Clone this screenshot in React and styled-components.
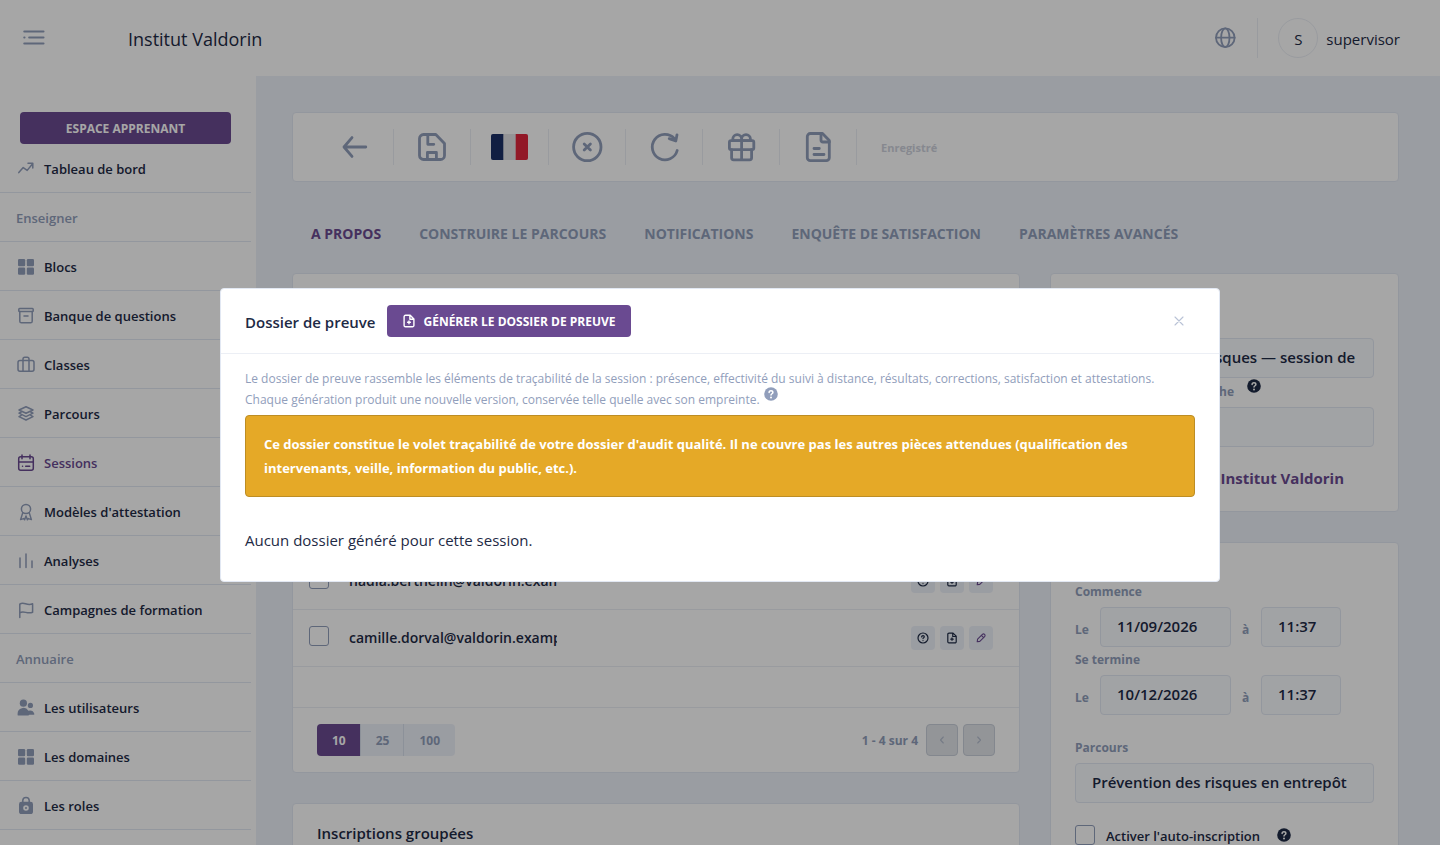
import React from "react";
import styled, { createGlobalStyle, css } from "styled-components";

const c = {
  ink: "#1e2a45",
  muted: "#919ebb",
  purple: "#6a4a91",
  page: "#edf2f9",
  line: "#eceff5",
  border: "#e2e8f3",
  field: "#f8fafd",
};

const Global = createGlobalStyle`
  *, *::before, *::after { box-sizing: border-box; }
  html, body { margin: 0; height: 100%; }
  body { font-family: "Open Sans", "Liberation Sans", sans-serif; font-size: 15px; color: ${c.ink}; }
  button, input { font-family: inherit; margin: 0; }
  svg { display: block; flex: none; }
`;

const Shell = styled.div`
  display: flex;
  flex-direction: column;
  height: 100vh;
  overflow: hidden;
  background: #fff;
`;

const Header = styled.header`
  flex: none;
  display: flex;
  align-items: center;
  height: 76px;
  padding: 0 40px 0 22px;
`;

const IconButton = styled.button`
  display: grid;
  place-items: center;
  padding: 0;
  border: 0;
  background: none;
  color: ${c.muted};
  cursor: pointer;
`;

const Brand = styled.div`
  flex: 1;
  margin-left: 82px;
  padding-top: 2px;
  font-size: 18px;
  line-height: 24px;
`;

const HeaderDivider = styled.span`
  width: 1px;
  height: 40px;
  margin: 0 20px 0 21px;
  background: ${c.line};
`;

const UserButton = styled.button`
  display: flex;
  align-items: center;
  gap: 8px;
  padding: 0;
  border: 0;
  background: none;
  color: ${c.ink};
  font-size: 15px;
  line-height: 24px;
`;

const Avatar = styled.span`
  display: grid;
  place-items: center;
  width: 40px;
  height: 40px;
  padding-top: 2px;
  border: 1px solid ${c.line};
  border-radius: 50%;
`;

const UserName = styled.span`
  padding-top: 2px;
`;

const Columns = styled.div`
  flex: 1;
  min-height: 0;
  display: flex;
`;

const Sidebar = styled.nav`
  flex: none;
  width: 256px;
  padding: 36px 5px 0 0;
  overflow: hidden;
`;

const PrimaryButton = styled.button`
  display: inline-flex;
  align-items: center;
  justify-content: center;
  gap: 7px;
  height: 32px;
  padding: 0 15px;
  border: 0;
  border-radius: 4px;
  background: ${c.purple};
  color: #fff;
  font-size: 12px;
  font-weight: 700;
  text-transform: uppercase;
`;

const LearnerButton = styled(PrimaryButton)`
  display: flex;
  width: calc(100% - 40px);
  margin: 0 20px;
`;

const navRow = css`
  display: flex;
  align-items: center;
  height: 49px;
  border-bottom: 1px solid ${c.border};
  font-size: 13px;
  font-weight: 600;
  line-height: 20px;
`;

const NavLink = styled.a`
  ${navRow}
  gap: 8px;
  padding: 2px 16px 0;
  color: ${(p) => (p.$active ? c.purple : c.ink)};
  text-decoration: none;
  svg { color: ${(p) => (p.$active ? c.purple : c.muted)}; }
`;

const NavHeading = styled.div`
  ${navRow}
  padding: 2px 16px 0;
  color: ${c.muted};
`;

const Main = styled.main`
  flex: 1;
  min-width: 0;
  padding: 36px 41px 0 36px;
  overflow: hidden;
  background: ${c.page};
`;

const Card = styled.section`
  border: 1px solid ${c.border};
  border-radius: 4px;
  background: #fff;
`;

const Toolbar = styled(Card)`
  display: flex;
  align-items: center;
  height: 70px;
  padding: 0 24px;
`;

const Tool = styled(IconButton)`
  height: 36px;
  padding: 0 20px;
  border-right: 1px solid ${c.line};
`;

const Saved = styled.span`
  margin-left: 24px;
  color: #ced2dc;
  font-size: 11px;
  font-weight: 700;
`;

const Tabs = styled.div`
  display: flex;
  gap: 38px;
  padding: 40px 19px 27px;
`;

const Tab = styled.a`
  color: ${(p) => (p.$active ? c.purple : c.muted)};
  font-size: 14px;
  font-weight: 700;
  line-height: 24px;
  text-decoration: none;
  text-transform: uppercase;
  white-space: nowrap;
`;

const Grid = styled.div`
  display: grid;
  grid-template-columns: minmax(0, 1fr) 349px;
  gap: 30px;
  align-items: start;
`;

const Stack = styled.div`
  display: grid;
  gap: 30px;
`;

const CardHead = styled.div`
  height: ${(p) => p.$height}px;
`;

const Table = styled.table`
  width: 100%;
  border-collapse: separate;
  border-spacing: 0;
  table-layout: fixed;
  td {
    height: 57px;
    padding: 0;
    border-bottom: 1px solid ${c.line};
  }
  td:first-child { width: 56px; padding: 0 0 4px 16px; }
  td:nth-child(2) { width: 208px; }
  td:last-child { padding-right: 26px; }
`;

const Check = styled.input`
  appearance: none;
  flex: none;
  display: block;
  width: 20px;
  height: 20px;
  margin: 0;
  border: 1px solid ${c.muted};
  border-radius: 3px;
  background: #fff;
`;

const Email = styled.div`
  overflow: hidden;
  font-size: 14px;
  font-weight: 600;
  line-height: 24px;
  white-space: nowrap;
`;

const Actions = styled.div`
  display: flex;
  justify-content: flex-end;
  gap: 5px;
`;

const Action = styled(IconButton)`
  width: 24px;
  height: 24px;
  border-radius: 4px;
  background: ${c.page};
  color: ${(p) => (p.$accent ? c.purple : c.ink)};
`;

const Spacer = styled.div`
  height: 41px;
  border-bottom: 1px solid ${c.line};
`;

const TableFoot = styled.div`
  display: flex;
  align-items: center;
  justify-content: space-between;
  padding: 16px 24px;
`;

const SizeGroup = styled.div`
  display: flex;
  overflow: hidden;
  border-radius: 4px;
`;

const SizeButton = styled.button`
  height: 32px;
  padding: 0 14px 0 15px;
  border: 0;
  border-right: 1px solid #d8dfeb;
  background: ${(p) => (p.$active ? c.purple : c.page)};
  color: ${(p) => (p.$active ? "#fff" : c.muted)};
  font-size: 12px;
  font-weight: 700;
  &:last-child { padding-right: 15px; border-right: 0; }
`;

const Pager = styled.div`
  display: flex;
  align-items: center;
  color: ${c.muted};
  font-size: 12px;
  font-weight: 700;
  button + button { margin-left: 5px; }
`;

const PageButton = styled(IconButton)`
  width: 32px;
  height: 32px;
  border: 1px solid #c9cfda;
  border-radius: 4px;
  background: #e2e5ea;
  color: #b4bdce;
`;

const Count = styled.span`
  margin-right: 8px;
`;

const CardTitle = styled.h2`
  margin: 0;
  padding: 17px 24px 80px;
  font-size: 15px;
  font-weight: 600;
  line-height: 24px;
`;

const Form = styled.div`
  padding: 0 24px;
`;

const Label = styled.label`
  display: flex;
  align-items: center;
  justify-content: ${(p) => (p.$width ? "flex-end" : "flex-start")};
  width: ${(p) => (p.$width ? `${p.$width}px` : "auto")};
  height: 28px;
  padding-bottom: 3px;
  color: ${c.muted};
  font-size: 12px;
  font-weight: 700;
`;

const HelpRow = styled.div`
  display: flex;
  gap: 13px;
  height: 29px;
  padding-top: 1px;
`;

const Help = styled.span`
  display: inline-block;
  color: ${c.ink};
`;

const InlineHelp = styled(Help)`
  margin: -5px 0 0 1px;
  color: ${c.muted};
  vertical-align: 3px;
`;

const Field = styled.input`
  display: block;
  width: ${(p) => (p.$width ? `${p.$width}px` : "100%")};
  height: 40px;
  padding: 0 16px 2px;
  border: 1px solid ${c.border};
  border-radius: 4px;
  background: ${c.field};
  color: ${c.ink};
  font-size: 15px;
  font-weight: 600;
`;

const Owner = styled.div`
  display: flex;
  justify-content: flex-end;
  padding: 19px 30px 21px 0;
  a {
    color: ${c.purple};
    font-size: 15px;
    font-weight: 700;
    line-height: 24px;
    text-decoration: none;
  }
`;

const DateRow = styled.div`
  display: flex;
  align-items: center;
`;

const Small = styled.label`
  width: ${(p) => p.$width}px;
  padding: 4px 0 0 ${(p) => p.$indent || 0}px;
  color: ${c.muted};
  font-size: 12px;
  font-weight: 700;
`;

const Group = styled.div`
  margin-top: 20px;
`;

const CheckRow = styled.div`
  display: flex;
  align-items: center;
  gap: 11px;
  padding: 21px 0;
  font-size: 13px;
  font-weight: 600;
  line-height: 20px;
  label { padding-top: 2px; }
  span { margin-left: 6px; }
`;

const Backdrop = styled.div`
  position: fixed;
  inset: 0;
  display: flex;
  align-items: center;
  justify-content: center;
  padding: 25px 24px 0;
  background: rgba(0, 0, 0, 0.35);
`;

const Dialog = styled.div`
  width: 1000px;
  max-width: 100%;
  border: 1px solid ${c.border};
  border-radius: 4px;
  background: #fff;
`;

const DialogHead = styled.div`
  display: flex;
  align-items: center;
  height: 65px;
  padding: 0 32px 0 24px;
  border-bottom: 1px solid ${c.line};
  h1 {
    margin: 0 12px 0 0;
    padding-top: 2px;
    font-size: 15px;
    font-weight: 600;
    line-height: 24px;
  }
`;

const Close = styled(IconButton)`
  width: 16px;
  height: 16px;
  margin-left: auto;
  color: #b9c2d6;
`;

const DialogBody = styled.div`
  padding: 14px 24px 29px;
`;

const Intro = styled.p`
  margin: 0;
  color: ${c.muted};
  font-size: 12px;
  line-height: 21px;
`;

const Alert = styled.div`
  margin-top: 5px;
  padding: 16px 18px;
  border: 1px solid #bd8d24;
  border-radius: 4px;
  background: #e5a927;
  color: #fff;
  font-size: 13px;
  font-weight: 700;
  line-height: 24px;
`;

const Empty = styled.p`
  margin: 31px 0 0;
  font-size: 15px;
  line-height: 24px;
`;

function Svg({ size = 16, box = size, sw = 1.3, children }) {
  return (
    <svg width={size} height={size} viewBox={`0 0 ${box} ${box}`} fill="none" stroke="currentColor"
      strokeWidth={sw} strokeLinecap="round" strokeLinejoin="round" aria-hidden="true">
      {children}
    </svg>
  );
}

const squares = (
  <g fill="currentColor" stroke="none">
    <rect x="2" y="2" width="7.200" height="7.200" rx="1.200" />
    <rect x="10.800" y="2" width="7.200" height="7.200" rx="1.200" />
    <rect x="2" y="10.500" width="7.200" height="7.200" rx="1.200" />
    <rect x="10.800" y="10.500" width="7.200" height="7.200" rx="1.200" />
  </g>
);

const navIcons = {
  trend: <path d="M2.8 13.6 7.2 8.6l4 2.8 5.2-6.400M12 4.200h4.800v4.800" />,
  squares,
  archive: (
    <>
      <rect x="2.800" y="2.600" width="14.400" height="3" rx="0.800" />
      <path d="M3.800 5.600v9.600a1.600 1.600 0 0 0 1.600 1.600h9.200a1.600 1.600 0 0 0 1.600-1.600V5.600M8 10h4" />
    </>
  ),
  briefcase: (
    <>
      <rect x="2" y="5.400" width="16" height="10.800" rx="2" />
      <path d="M7 16.200V4a1.800 1.800 0 0 1 1.800-1.800h2.400A1.800 1.800 0 0 1 13 4v12.200" />
    </>
  ),
  layers: (
    <>
      <path d="m3 6 7-3.300L17 6l-7 3.300z" />
      <path d="m5.200 8-2.200 1.200 7 3.400 7-3.400L14.800 8M5.200 11.400 3 12.600l7 3.400 7-3.400-2.200-1.200" />
    </>
  ),
  calendar: (
    <>
      <rect x="2.700" y="3.800" width="14.600" height="13.400" rx="2" />
      <path d="M2.700 9h14.600M6 2v3.800M14 2v3.800M6.500 13.200h.1M9.700 13.200h4" />
    </>
  ),
  award: (
    <>
      <circle cx="10" cy="7" r="4.600" />
      <path d="m6.800 10.600-2.200 7 3-1 1 1.200L10 14l1.400 3.800 1-1.200 3 1-2.200-7" />
    </>
  ),
  bars: <path d="M4 7v9.500M10 3v13.500M16 10v6.500" />,
  flag: <path d="M3.800 17.600V4.200c4-3 7 2 12.800-.4v8.400c-5.600 2.400-8.600-2.200-12.800.6" />,
  users: (
    <g fill="currentColor" stroke="none">
      <circle cx="7.400" cy="5.200" r="3.600" />
      <circle cx="14.400" cy="7.400" r="2.600" />
      <path d="M1.600 17v-1.200a5.800 5.800 0 0 1 10.800-3 5 5 0 0 1 6 3.200c.1.500-.2.800-.7.800h-4.400a1.400 1.400 0 0 1-1.200.8H2.400a.8.800 0 0 1-.8-.6z" />
    </g>
  ),
  lock: (
    <>
      <path d="M6.800 7V4.600a3.200 3.200 0 0 1 6.400 0V7" />
      <path fill="currentColor" stroke="none" fillRule="evenodd"
        d="M5.400 5.800h9.200a2.400 2.400 0 0 1 2.400 2.400v7.200a2.600 2.600 0 0 1-2.600 2.600H5.600a2.600 2.600 0 0 1-2.600-2.600V8.200a2.400 2.400 0 0 1 2.400-2.400zM10 9.200a2.800 2.800 0 1 0 0 5.600 2.800 2.800 0 0 0 0-5.600zm0 1.800a1 1 0 1 1 0 2 1 1 0 0 1 0-2z" />
    </>
  ),
};

const NavIcon = ({ name }) => <Svg size={20} sw={1.5}>{navIcons[name]}</Svg>;

const tools = [
  ["Retour", <path d="M28.800 18H7M15 8.600 7 18l8 9.400" />],
  ["Enregistrer", (
    <>
      <path d="M9.500 5.500h12.300l8.700 9v12a4 4 0 0 1-4 4h-17a4 4 0 0 1-4-4v-17a4 4 0 0 1 4-4z" />
      <path d="M13.800 5.500v9.800h6M13.400 30.500v-7h9v7" />
    </>
  )],
  ["Langue", null],
  ["Annuler", (
    <>
      <circle cx="18.300" cy="18" r="13.700" />
      <path d="m15.200 14.900 6.200 6.200M21.400 14.900l-6.200 6.200" />
    </>
  )],
  ["Recharger", (
    <path d="M31.200 21.500A12.700 12.700 0 1 1 28.400 9.600M31 5.800l-1.200 6.200-6.600-2.400" />
  )],
  ["Offrir", (
    <>
      <rect x="6.400" y="11.700" width="24.400" height="9" rx="1.600" />
      <path d="M8.600 20.700v8.100a2 2 0 0 0 2 2h16a2 2 0 0 0 2-2v-8.100M18.600 11.700v19.100M18.600 11.700H9.800V10a4.400 4.400 0 0 1 8.800 0zM18.600 11.700h8.800V10a4.400 4.400 0 0 0-8.800 0z" />
    </>
  )],
  ["Document", (
    <>
      <path d="M10.300 4.500h12.200l6.800 7v17.200a3 3 0 0 1-3 3h-16a3 3 0 0 1-3-3V7.500a3 3 0 0 1 3-3z" />
      <path d="M21 4.500v6.500a2 2 0 0 0 2 2h6.300M14 19.500h5.300M14 25.500h10" />
    </>
  )],
];

const Flag = () => (
  <svg width="37" height="26" viewBox="0 0 37 26" aria-hidden="true">
    <rect width="37" height="26" rx="2" fill="#e4e4e6" />
    <path d="M2 0h10.300v26H2a2 2 0 0 1-2-2V2a2 2 0 0 1 2-2z" fill="#1b2f66" />
    <path d="M24.700 0H35a2 2 0 0 1 2 2v22a2 2 0 0 1-2 2H24.700z" fill="#e0263d" />
  </svg>
);

const HelpIcon = () => (
  <svg width="14" height="14" viewBox="0 0 14 14" aria-hidden="true">
    <circle cx="7" cy="7" r="6.800" fill="currentColor" />
    <path d="M5.100 5.500C5.100 4.400 5.900 3.700 7 3.700s1.900.7 1.900 1.700c0 1.300-1.900 1.400-1.900 2.700" fill="none" stroke="#fff" strokeWidth="1.500" strokeLinecap="round" />
    <circle cx="7" cy="10.400" r="1" fill="#fff" />
  </svg>
);

const FilePlus = ({ size }) => (
  <Svg size={size} box={16} sw={1.6}>
    <path d="M4 1.400h5.400l4.200 4.200v7.400a1.600 1.600 0 0 1-1.600 1.600H4A1.600 1.600 0 0 1 2.400 13V3A1.600 1.600 0 0 1 4 1.400zM9 1.400V6h4.600M8 7.900v3.200M6.400 9.500h3.200" />
  </Svg>
);

const navigation = [
  ["trend", "Tableau de bord"],
  [null, "Enseigner"],
  ["squares", "Blocs"],
  ["archive", "Banque de questions"],
  ["briefcase", "Classes"],
  ["layers", "Parcours"],
  ["calendar", "Sessions"],
  ["award", "Modèles d'attestation"],
  ["bars", "Analyses"],
  ["flag", "Campagnes de formation"],
  [null, "Annuaire"],
  ["users", "Les utilisateurs"],
  ["squares", "Les domaines"],
  ["lock", "Les roles"],
];

const tabs = ["A propos", "Construire le parcours", "Notifications", "Enquête de satisfaction", "Paramètres avancés"];
const people = ["nadia.berthelin@valdorin.example", "camille.dorval@valdorin.example"];

function DateLine({ id, title, date }) {
  return (
    <>
      <Label htmlFor={id}>{title}</Label>
      <DateRow>
        <Small htmlFor={id} $width={25}>Le</Small>
        <Field id={id} $width={131} defaultValue={date} />
        <Small htmlFor={`${id}-time`} $width={30} $indent={11}>à</Small>
        <Field id={`${id}-time`} $width={80} defaultValue="11:37" />
      </DateRow>
    </>
  );
}

export default function App() {
  return (
    <>
      <Global />
      <Shell>
        <Header>
          <IconButton aria-label="Menu">
            <Svg size={24} sw={2.1}><path d="M2.300 5.500h19.200M7.200 11.500h14.300M2.300 11.500h.2M2.300 17.500h19.200" /></Svg>
          </IconButton>
          <Brand>Institut Valdorin</Brand>
          <IconButton aria-label="Langue">
            <Svg size={22} sw={1.8}>
              <circle cx="11.300" cy="10.700" r="9.300" />
              <ellipse cx="11.300" cy="10.700" rx="4.200" ry="9.300" />
              <path d="M2 10.700h18.600" />
            </Svg>
          </IconButton>
          <HeaderDivider />
          <UserButton><Avatar>S</Avatar><UserName>supervisor</UserName></UserButton>
        </Header>
        <Columns>
          <Sidebar>
            <LearnerButton>Espace apprenant</LearnerButton>
            {navigation.map(([icon, text]) =>
              icon ? (
                <NavLink key={text} href="#" $active={text === "Sessions"}>
                  <NavIcon name={icon} />{text}
                </NavLink>
              ) : (
                <NavHeading key={text}>{text}</NavHeading>
              )
            )}
          </Sidebar>
          <Main>
            <Toolbar>
              {tools.map(([name, drawing]) => (
                <Tool key={name} aria-label={name}>
                  {drawing ? <Svg size={36} sw={2.8}>{drawing}</Svg> : <Flag />}
                </Tool>
              ))}
              <Saved>Enregistré</Saved>
            </Toolbar>
            <Tabs>
              {tabs.map((t, i) => <Tab key={t} href="#" $active={i === 0}>{t}</Tab>)}
            </Tabs>
            <Grid>
              <Stack>
                <Card>
                  <CardHead $height={279} />
                  <Table>
                    <tbody>
                      {people.map((p) => (
                        <tr key={p}>
                          <td><Check type="checkbox" aria-label={p} /></td>
                          <td><Email>{p}</Email></td>
                          <td>
                            <Actions>
                              <Action aria-label="Aide">
                                <Svg size={12} sw={1.2}>
                                  <circle cx="6" cy="6" r="5" />
                                  <path d="M4.700 4.900c0-.8.600-1.300 1.300-1.300s1.300.5 1.300 1.200c0 .9-1.300.9-1.300 1.800M6 8.500v.1" />
                                </Svg>
                              </Action>
                              <Action aria-label="Dossier"><FilePlus size={12} /></Action>
                              <Action aria-label="Modifier" $accent>
                                <Svg size={12} sw={1.1}>
                                  <path d="m2.600 7.200 4.800-4.800a1.500 1.500 0 0 1 2.200 2.200L4.800 9.400l-2.600.4zM6.400 3.400l2.200 2.200" />
                                </Svg>
                              </Action>
                            </Actions>
                          </td>
                        </tr>
                      ))}
                    </tbody>
                  </Table>
                  <Spacer />
                  <TableFoot>
                    <SizeGroup>
                      {[10, 25, 100].map((n) => <SizeButton key={n} $active={n === 10}>{n}</SizeButton>)}
                    </SizeGroup>
                    <Pager>
                      <Count>1 - 4 sur 4</Count>
                      <PageButton aria-label="Page précédente"><Svg size={12} sw={1.1}><path d="M7.300 3 4.500 6l2.800 3" /></Svg></PageButton>
                      <PageButton aria-label="Page suivante"><Svg size={12} sw={1.1}><path d="m4.700 3 2.800 3-2.800 3" /></Svg></PageButton>
                    </Pager>
                  </TableFoot>
                </Card>
                <Card><CardTitle>Inscriptions groupées</CardTitle></Card>
              </Stack>
              <Stack>
                <Card>
                  <CardHead $height={64} />
                  <Form>
                    <Field aria-label="Nom" defaultValue="Prévention des risques — session de" />
                    <HelpRow>
                      <Label htmlFor="keywords" $width={159}>Mots clés de la recherche</Label>
                      <Help><HelpIcon /></Help>
                    </HelpRow>
                    <Field id="keywords" />
                    <Owner><a href="#">Institut Valdorin</a></Owner>
                  </Form>
                </Card>
                <Card>
                  <CardHead $height={36} />
                  <Form>
                    <DateLine id="start" title="Commence" date="11/09/2026" />
                    <DateLine id="end" title="Se termine" date="10/12/2026" />
                    <Group>
                      <Label htmlFor="course">Parcours</Label>
                      <Field id="course" defaultValue="Prévention des risques en entrepôt" />
                    </Group>
                    <CheckRow>
                      <Check type="checkbox" id="self" />
                      <label htmlFor="self">Activer l'auto-inscription</label>
                      <Help><HelpIcon /></Help>
                    </CheckRow>
                  </Form>
                </Card>
              </Stack>
            </Grid>
          </Main>
        </Columns>
      </Shell>
      <Backdrop>
        <Dialog role="dialog" aria-modal="true" aria-labelledby="dialog-title">
          <DialogHead>
            <h1 id="dialog-title">Dossier de preuve</h1>
            <PrimaryButton><FilePlus size={14} />Générer le dossier de preuve</PrimaryButton>
            <Close aria-label="Fermer"><Svg size={16} sw={1.1}><path d="m4 4 8 8M12 4l-8 8" /></Svg></Close>
          </DialogHead>
          <DialogBody>
            <Intro>
              Le dossier de preuve rassemble les éléments de traçabilité de la session : présence, effectivité du suivi à distance, résultats, corrections, satisfaction et attestations. Chaque génération produit une nouvelle version, conservée telle quelle avec son empreinte.{" "}
              <InlineHelp><HelpIcon /></InlineHelp>
            </Intro>
            <Alert>
              Ce dossier constitue le volet traçabilité de votre dossier d'audit qualité. Il ne couvre pas les autres pièces attendues (qualification des intervenants, veille, information du public, etc.).
            </Alert>
            <Empty>Aucun dossier généré pour cette session.</Empty>
          </DialogBody>
        </Dialog>
      </Backdrop>
    </>
  );
}
